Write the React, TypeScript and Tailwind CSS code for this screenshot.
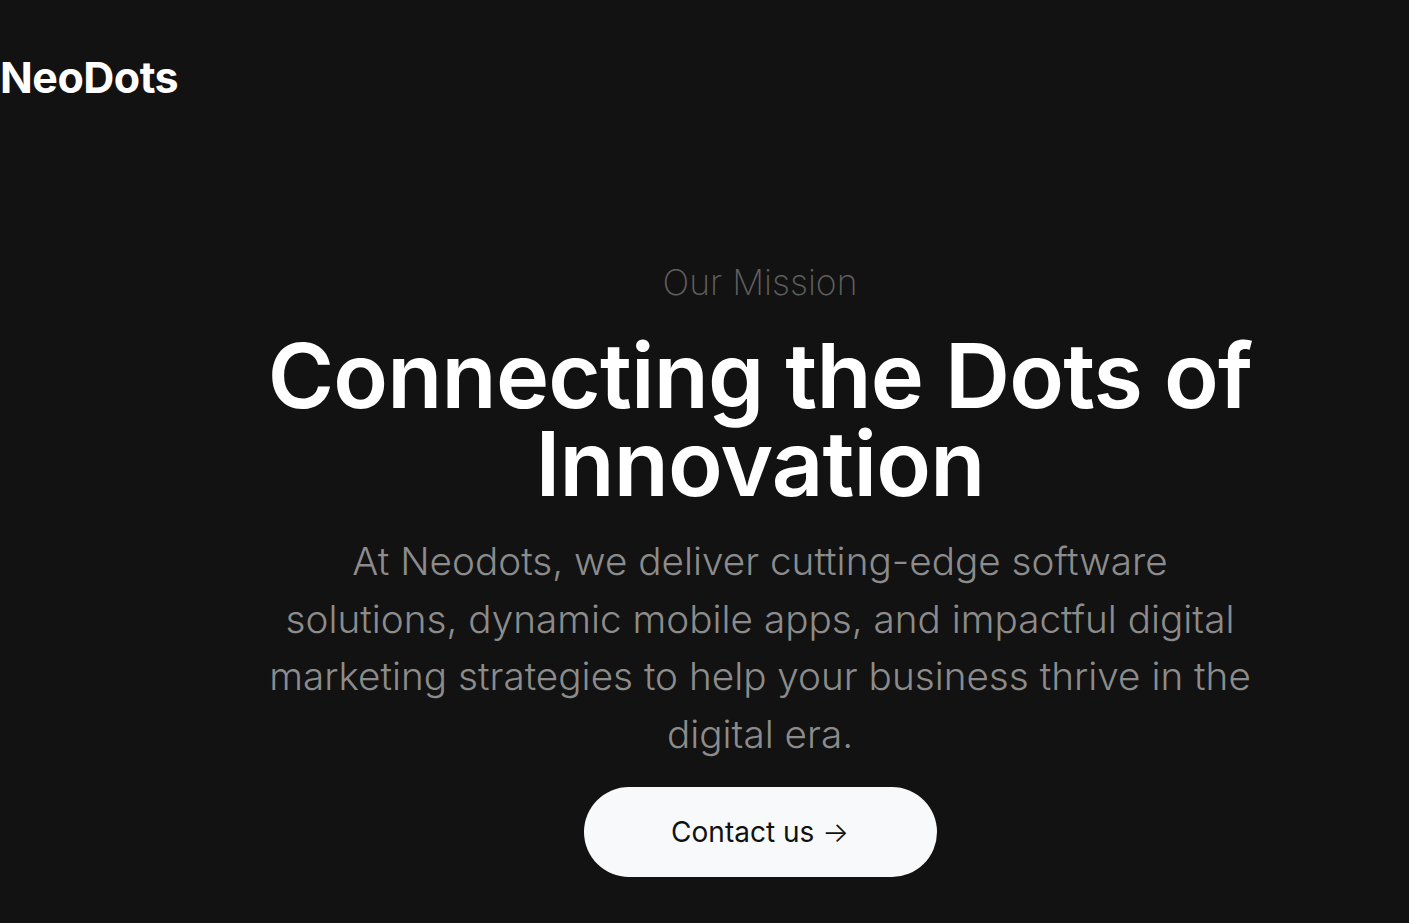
export default function App() {
  return (
    <div
      className="min-h-screen bg-[#121212] text-white"
      style={{ fontFamily: 'Inter, "Noto Sans", sans-serif' }}
    >
      <header className="pt-[52px]">
        <a href="#" className="text-[43px] font-bold leading-[50px] tracking-[-0.5px]">
          NeoDots
        </a>
      </header>
      <main className="flex justify-center pl-[111px] pt-[159px]">
        <section className="flex w-[984px] flex-col items-center text-center">
          <p className="text-[35.5px] font-extralight leading-[44px] text-[#5f5f5f]">Our Mission</p>
          <h1 className="mt-[27px] whitespace-nowrap text-[90px] font-semibold leading-[88px] tracking-[-0.8px]">
            Connecting the Dots of
            <br />
            Innovation
          </h1>
          <p className="mt-[25px] text-[38.7px] font-light leading-[57.5px] text-[#8c8c8c]">
            At Neodots, we deliver cutting-edge software solutions, dynamic mobile apps, and impactful
            digital marketing strategies to help your business thrive in the digital era.
          </p>
          <button className="mt-[24px] h-[90px] w-[353px] rounded-full bg-[#f8f9fa] text-[28px] text-[#111]">
            Contact us <span className="font-light">→</span>
          </button>
        </section>
      </main>
    </div>
  );
}
